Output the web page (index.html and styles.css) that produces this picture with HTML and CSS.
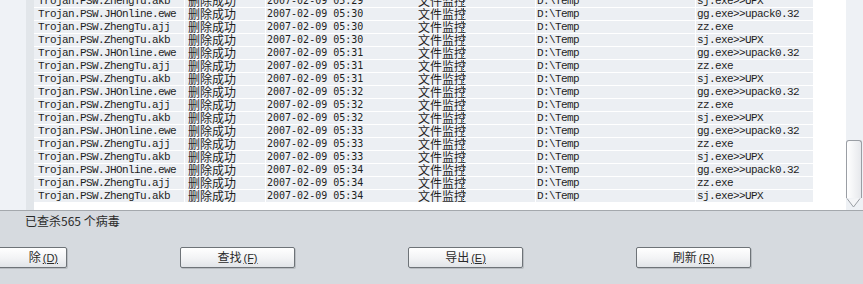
FILE: index.html
```html
<!DOCTYPE html>
<html lang="zh-CN">
<head>
    <meta charset="UTF-8">
    <title>病毒查杀日志</title>
    <link rel="stylesheet" href="styles.css">
</head>
<body>
    <div class="list">
        <div class="gutter"></div>
        <div class="rows">
            <div class="scroller">
                <div class="row"><span class="c-name">Trojan.PSW.ZhengTu.akb</span><span class="c-res">删除成功</span><span class="c-date">2007-02-09 05:29</span><span class="c-type"><i>文件监控</i></span><span class="c-path">D:\Temp</span><span class="c-note">sj.exe&gt;&gt;UPX</span></div>
                <div class="row"><span class="c-name">Trojan.PSW.JHOnline.ewe</span><span class="c-res">删除成功</span><span class="c-date">2007-02-09 05:30</span><span class="c-type"><i>文件监控</i></span><span class="c-path">D:\Temp</span><span class="c-note">gg.exe&gt;&gt;upack0.32</span></div>
                <div class="row"><span class="c-name">Trojan.PSW.ZhengTu.ajj</span><span class="c-res">删除成功</span><span class="c-date">2007-02-09 05:30</span><span class="c-type"><i>文件监控</i></span><span class="c-path">D:\Temp</span><span class="c-note">zz.exe</span></div>
                <div class="row"><span class="c-name">Trojan.PSW.ZhengTu.akb</span><span class="c-res">删除成功</span><span class="c-date">2007-02-09 05:30</span><span class="c-type"><i>文件监控</i></span><span class="c-path">D:\Temp</span><span class="c-note">sj.exe&gt;&gt;UPX</span></div>
                <div class="row"><span class="c-name">Trojan.PSW.JHOnline.ewe</span><span class="c-res">删除成功</span><span class="c-date">2007-02-09 05:31</span><span class="c-type"><i>文件监控</i></span><span class="c-path">D:\Temp</span><span class="c-note">gg.exe&gt;&gt;upack0.32</span></div>
                <div class="row"><span class="c-name">Trojan.PSW.ZhengTu.ajj</span><span class="c-res">删除成功</span><span class="c-date">2007-02-09 05:31</span><span class="c-type"><i>文件监控</i></span><span class="c-path">D:\Temp</span><span class="c-note">zz.exe</span></div>
                <div class="row"><span class="c-name">Trojan.PSW.ZhengTu.akb</span><span class="c-res">删除成功</span><span class="c-date">2007-02-09 05:31</span><span class="c-type"><i>文件监控</i></span><span class="c-path">D:\Temp</span><span class="c-note">sj.exe&gt;&gt;UPX</span></div>
                <div class="row"><span class="c-name">Trojan.PSW.JHOnline.ewe</span><span class="c-res">删除成功</span><span class="c-date">2007-02-09 05:32</span><span class="c-type"><i>文件监控</i></span><span class="c-path">D:\Temp</span><span class="c-note">gg.exe&gt;&gt;upack0.32</span></div>
                <div class="row"><span class="c-name">Trojan.PSW.ZhengTu.ajj</span><span class="c-res">删除成功</span><span class="c-date">2007-02-09 05:32</span><span class="c-type"><i>文件监控</i></span><span class="c-path">D:\Temp</span><span class="c-note">zz.exe</span></div>
                <div class="row"><span class="c-name">Trojan.PSW.ZhengTu.akb</span><span class="c-res">删除成功</span><span class="c-date">2007-02-09 05:32</span><span class="c-type"><i>文件监控</i></span><span class="c-path">D:\Temp</span><span class="c-note">sj.exe&gt;&gt;UPX</span></div>
                <div class="row"><span class="c-name">Trojan.PSW.JHOnline.ewe</span><span class="c-res">删除成功</span><span class="c-date">2007-02-09 05:33</span><span class="c-type"><i>文件监控</i></span><span class="c-path">D:\Temp</span><span class="c-note">gg.exe&gt;&gt;upack0.32</span></div>
                <div class="row"><span class="c-name">Trojan.PSW.ZhengTu.ajj</span><span class="c-res">删除成功</span><span class="c-date">2007-02-09 05:33</span><span class="c-type"><i>文件监控</i></span><span class="c-path">D:\Temp</span><span class="c-note">zz.exe</span></div>
                <div class="row"><span class="c-name">Trojan.PSW.ZhengTu.akb</span><span class="c-res">删除成功</span><span class="c-date">2007-02-09 05:33</span><span class="c-type"><i>文件监控</i></span><span class="c-path">D:\Temp</span><span class="c-note">sj.exe&gt;&gt;UPX</span></div>
                <div class="row"><span class="c-name">Trojan.PSW.JHOnline.ewe</span><span class="c-res">删除成功</span><span class="c-date">2007-02-09 05:34</span><span class="c-type"><i>文件监控</i></span><span class="c-path">D:\Temp</span><span class="c-note">gg.exe&gt;&gt;upack0.32</span></div>
                <div class="row"><span class="c-name">Trojan.PSW.ZhengTu.ajj</span><span class="c-res">删除成功</span><span class="c-date">2007-02-09 05:34</span><span class="c-type"><i>文件监控</i></span><span class="c-path">D:\Temp</span><span class="c-note">zz.exe</span></div>
                <div class="row"><span class="c-name">Trojan.PSW.ZhengTu.akb</span><span class="c-res">删除成功</span><span class="c-date">2007-02-09 05:34</span><span class="c-type"><i>文件监控</i></span><span class="c-path">D:\Temp</span><span class="c-note">sj.exe&gt;&gt;UPX</span></div>
            </div>
        </div>
        <div class="vscroll">
            <div class="thumb">
                <svg class="arrow" width="15" height="10" viewBox="0 0 15 10">
                    <path d="M1 0.5 L7.5 9 L14 0.5" fill="#f4f5f7" stroke="#9a9ea4" stroke-width="1"/>
                </svg>
            </div>
        </div>
    </div>

    <div class="panel">
        <div class="status">已查杀565 个病毒</div>
        <div class="buttons">
            <button class="btn btn-cut">除<u>(D)</u></button>
            <button class="btn">查找<u>(F)</u></button>
            <button class="btn">导出<u>(E)</u></button>
            <button class="btn">刷新<u>(R)</u></button>
        </div>
    </div>
</body>
</html>
```

FILE: styles.css
```css
body { margin: 0; width: 863px; height: 284px; overflow: hidden; background-color: #d6dadf; font-family: "Noto Sans CJK SC", "Liberation Sans", sans-serif; font-size: 12px; color: #1e1e1e; }

/* list area */
.list { display: flex; height: 210px; background-color: #ffffff; border-bottom: 1px solid #a4a8ad; }
.gutter { width: 26px; background-color: #eff2f6; border-right: 8px solid #e2e6ea; }
.rows { flex: 1; overflow: hidden; }
.scroller { margin-top: -5px; }

.row {
    display: grid;
    grid-template-columns: 151px 81px 145px 125px 160px 117px;
    height: 12px;
    border-bottom: 1px solid #ffffff;
    line-height: 12px;
    white-space: nowrap;
}
.row span {
    background-color: #eceff3;
    overflow: hidden;
}
.c-name, .c-res, .c-type, .c-path { border-right: 1px solid #ffffff; }

.c-name, .c-path, .c-note { font-family: "Liberation Mono", monospace; font-size: 11px; letter-spacing: -0.6px; }
.c-name { padding-left: 4px; }
.c-res { padding-left: 3px; }
.c-date { padding-left: 1px; font-family: "DejaVu Sans Mono", monospace; font-size: 10px; }
.c-type { padding-left: 7px; }
.c-type i { font-style: normal; display: inline-block; width: 45px; height: 12px; border-right: 1px dotted #444; }
.c-path, .c-note { padding-left: 1px; }

/* scrollbar */
.vscroll { width: 17px; background-color: #eef1f5; display: flex; flex-direction: column; justify-content: flex-end; padding-bottom: 12px; box-sizing: border-box; }
.thumb {
    position: relative;
    height: 57px;
    margin: 0 1px 0 0;
    border: 1px solid #9a9ea4;
    border-bottom: none;
    border-radius: 3px 3px 0 0;
    background: linear-gradient(to right, #ffffff, #e6e8ec);
}
.thumb .arrow { position: absolute; left: -1px; bottom: -10px; }

/* bottom panel */
.status { padding: 2px 0 0 25px; height: 18px; line-height: 16px; color: #2a2a2a; }
.buttons { display: flex; gap: 113px; margin: 16px 0 0 -48px; }
.btn {
    width: 115px;
    height: 21px;
    padding: 0;
    border: 1px solid #6e7378;
    border-radius: 2px;
    background: linear-gradient(to bottom, #ffffff 0%, #f2f3f5 55%, #e1e4e8 100%);
    box-shadow: 1px 1px 0 #b9bdc2;
    font-family: "Noto Sans CJK SC", sans-serif;
    font-size: 12px;
    color: #2a2a2a;
    line-height: 18px;
}
.btn u { font-family: "Liberation Sans", sans-serif; font-size: 11px; margin-left: 2px; }
.btn-cut { text-align: right; padding-right: 8px; }
```
